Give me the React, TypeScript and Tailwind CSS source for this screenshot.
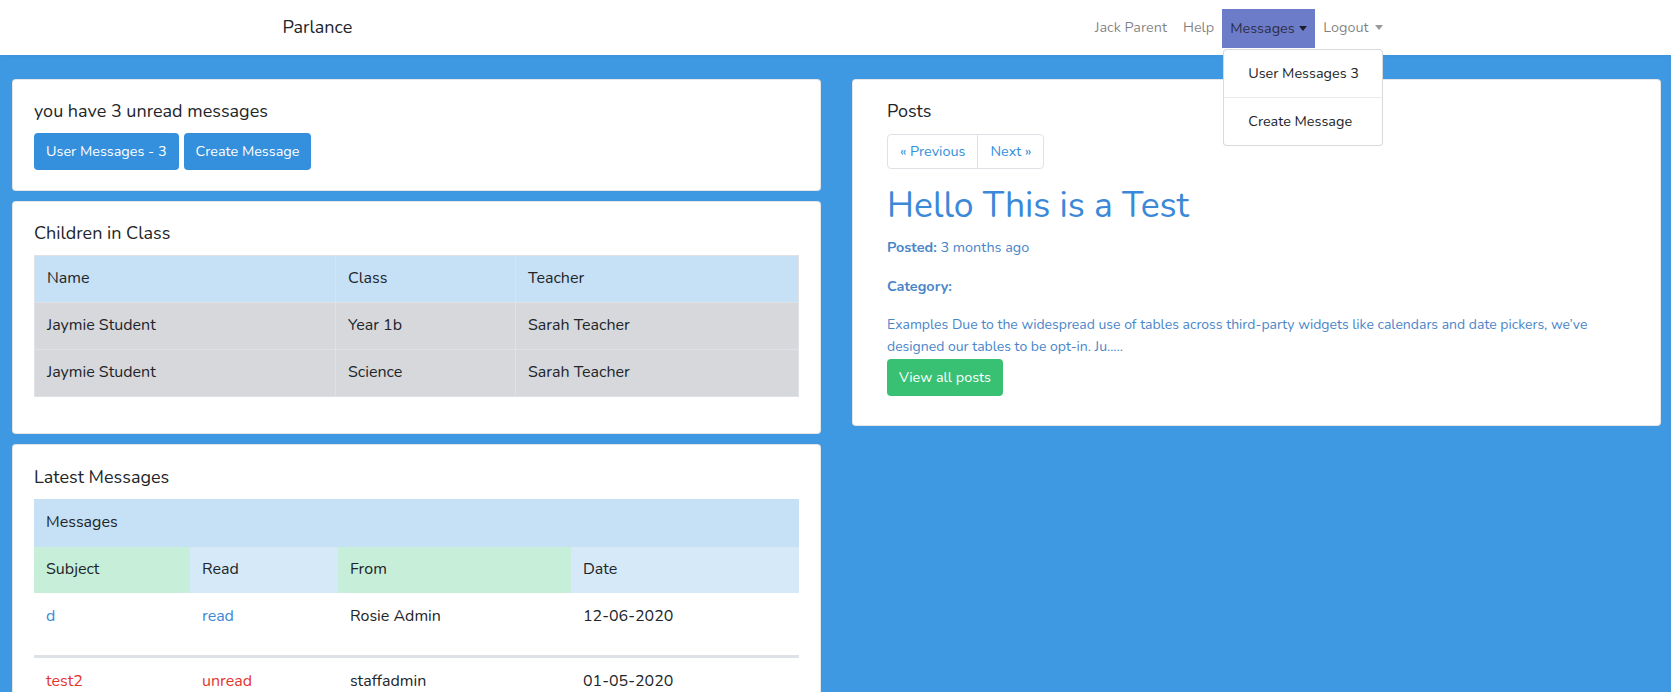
import React from 'react';

const font = "font-['Nunito','Open_Sans',sans-serif]";

const NavBar: React.FC = () => {
  return (
    <nav className="h-[55px] bg-white shadow-[0_2px_4px_rgba(0,0,0,0.04)] relative z-10">
      <div className="w-[1140px] mx-auto px-[15px] h-full flex items-center justify-between">
        <div className="text-[18px] text-[#212529] pl-[2px]">Parlance</div>
        <ul className="flex items-center h-full text-[14.4px]">
          <li className="px-[8px] text-black/50">Jack Parent</li>
          <li className="px-[8px] text-black/50">Help</li>
          <li className="relative">
            <div className="h-[39px] w-[93px] mt-[2px] bg-[#6d7cc8] text-[#2b2f4a] flex items-center pl-[8px]">
              Messages
              <span className="ml-[4px] border-x-[4.5px] border-t-[5px] border-x-transparent border-t-[#1b1e2e] inline-block"></span>
            </div>
            <div className="absolute left-[1px] top-[42px] w-[160px] bg-white border border-black/15 rounded-[4px] text-[#212529] py-[8px] whitespace-nowrap">
              <div className="px-[24px] h-[31px] flex items-center">User Messages 3</div>
              <div className="border-t border-[#e9ecef] my-[8px]"></div>
              <div className="px-[24px] h-[31px] flex items-center">Create Message</div>
            </div>
          </li>
          <li className="px-[8px] text-black/50 flex items-center">
            Logout
            <span className="ml-[6px] border-x-[4.5px] border-t-[5px] border-x-transparent border-t-black/40 inline-block"></span>
          </li>
        </ul>
      </div>
    </nav>
  );
};

const Card: React.FC<{ className?: string; children: React.ReactNode }> = ({ className, children }) => (
  <div className={'bg-white rounded-[4px] border border-black/10 ' + (className || '')}>{children}</div>
);

const children = [
  { name: 'Jaymie Student', cls: 'Year 1b', teacher: 'Sarah Teacher' },
  { name: 'Jaymie Student', cls: 'Science', teacher: 'Sarah Teacher' },
];

const App: React.FC = () => {
  return (
    <div className={'min-h-[692px] bg-[#3f99e2] text-[14.4px] leading-[1.6] text-[#212529] ' + font}>
      <NavBar />
      <div className="flex gap-[31px] pl-[12px] pr-[10px] pt-[24px] items-start">
        {/* left column */}
        <div className="flex-1 flex flex-col gap-[10px]">
          <Card className="px-[21px] pt-[19px] pb-[20px]">
            <div className="text-[18px] leading-[24px]">you have 3 unread messages</div>
            <div className="flex gap-[5px] mt-[10px]">
              <button className="h-[37px] px-[12px] bg-[#3490dc] text-white rounded-[4px]">User Messages - 3</button>
              <button className="h-[37px] px-[12px] bg-[#3490dc] text-white rounded-[4px]">Create Message</button>
            </div>
          </Card>
          <Card className="px-[21px] pt-[19px] pb-[36px]">
            <div className="text-[18px] leading-[24px] mb-[10px]">Children in Class</div>
            <table className="w-full border-collapse text-[16px]">
              <thead>
                <tr className="bg-[#c6e0f5]">
                  <td className="border border-[#dee2e6] px-[12px] h-[47px] w-[301px]">Name</td>
                  <td className="border border-[#dee2e6] px-[12px] h-[47px] w-[180px]">Class</td>
                  <td className="border border-[#dee2e6] px-[12px] h-[47px]">Teacher</td>
                </tr>
              </thead>
              <tbody>
                {children.map((c, i) => (
                  <tr key={i} className="bg-[#d6d8db]">
                    <td className="border border-[#dee2e6] px-[12px] h-[47px]">{c.name}</td>
                    <td className="border border-[#dee2e6] px-[12px] h-[47px]">{c.cls}</td>
                    <td className="border border-[#dee2e6] px-[12px] h-[47px]">{c.teacher}</td>
                  </tr>
                ))}
              </tbody>
            </table>
          </Card>
          <Card className="px-[21px] pt-[20px] pb-[20px]">
            <div className="text-[18px] leading-[24px] mb-[10px]">Latest Messages</div>
            <table className="w-full border-collapse text-[16px]">
              <thead>
                <tr className="bg-[#c6e0f5]">
                  <td colSpan={4} className="px-[12px] h-[48px]">Messages</td>
                </tr>
                <tr>
                  <td className="bg-[#c7eed8] px-[12px] h-[46px] w-[156px]">Subject</td>
                  <td className="bg-[#d6e9f8] px-[12px] h-[46px] w-[148px]">Read</td>
                  <td className="bg-[#c7eed8] px-[12px] h-[46px] w-[233px]">From</td>
                  <td className="bg-[#d6e9f8] px-[12px] h-[46px]">Date</td>
                </tr>
              </thead>
              <tbody>
                <tr className="border-b-[3px] border-[#dee2e6]">
                  <td className="px-[12px] pt-[11px] h-[63px] align-top text-[#3b88d8]">d</td>
                  <td className="px-[12px] pt-[11px] h-[63px] align-top text-[#3b88d8]">read</td>
                  <td className="px-[12px] pt-[11px] h-[63px] align-top">Rosie Admin</td>
                  <td className="px-[12px] pt-[11px] h-[63px] align-top">12-06-2020</td>
                </tr>
                <tr>
                  <td className="px-[12px] pt-[11px] h-[62px] align-top text-[#e3342f]">test2</td>
                  <td className="px-[12px] pt-[11px] h-[62px] align-top text-[#e3342f]">unread</td>
                  <td className="px-[12px] pt-[11px] h-[62px] align-top">staffadmin</td>
                  <td className="px-[12px] pt-[11px] h-[62px] align-top">01-05-2020</td>
                </tr>
              </tbody>
            </table>
          </Card>
        </div>
        {/* right column */}
        <div className="flex-1">
          <Card className="px-[34px] pt-[19px] pb-[29px]">
            <div className="text-[18px] leading-[24px]">Posts</div>
            <div className="flex mt-[11px] w-fit border border-[#dee2e6] rounded-[4px] text-[#3490dc]">
              <div className="h-[33px] px-[12px] flex items-center border-r border-[#dee2e6]">« Previous</div>
              <div className="h-[33px] px-[12px] flex items-center">Next »</div>
            </div>
            <h1 className="text-[35.5px] leading-[1.2] text-[#3b88d8] mt-[16px]">Hello This is a Test</h1>
            <div className="text-[#4a85c9] mt-[8px]">
              <span className="font-bold">Posted:</span> 3 months ago
            </div>
            <div className="text-[#4a85c9] font-bold mt-[16px]">Category:</div>
            <p className="text-[#4a85c9] mt-[16px] leading-[22px] text-[14px]">
              Examples Due to the widespread use of tables across third-party widgets like calendars and date pickers, we’ve
              <br />
              designed our tables to be opt-in. Ju.....
            </p>
            <button className="h-[37px] px-[12px] bg-[#38c172] text-white rounded-[4px] mt-[1px]">View all posts</button>
          </Card>
        </div>
      </div>
    </div>
  );
};

export default App;
